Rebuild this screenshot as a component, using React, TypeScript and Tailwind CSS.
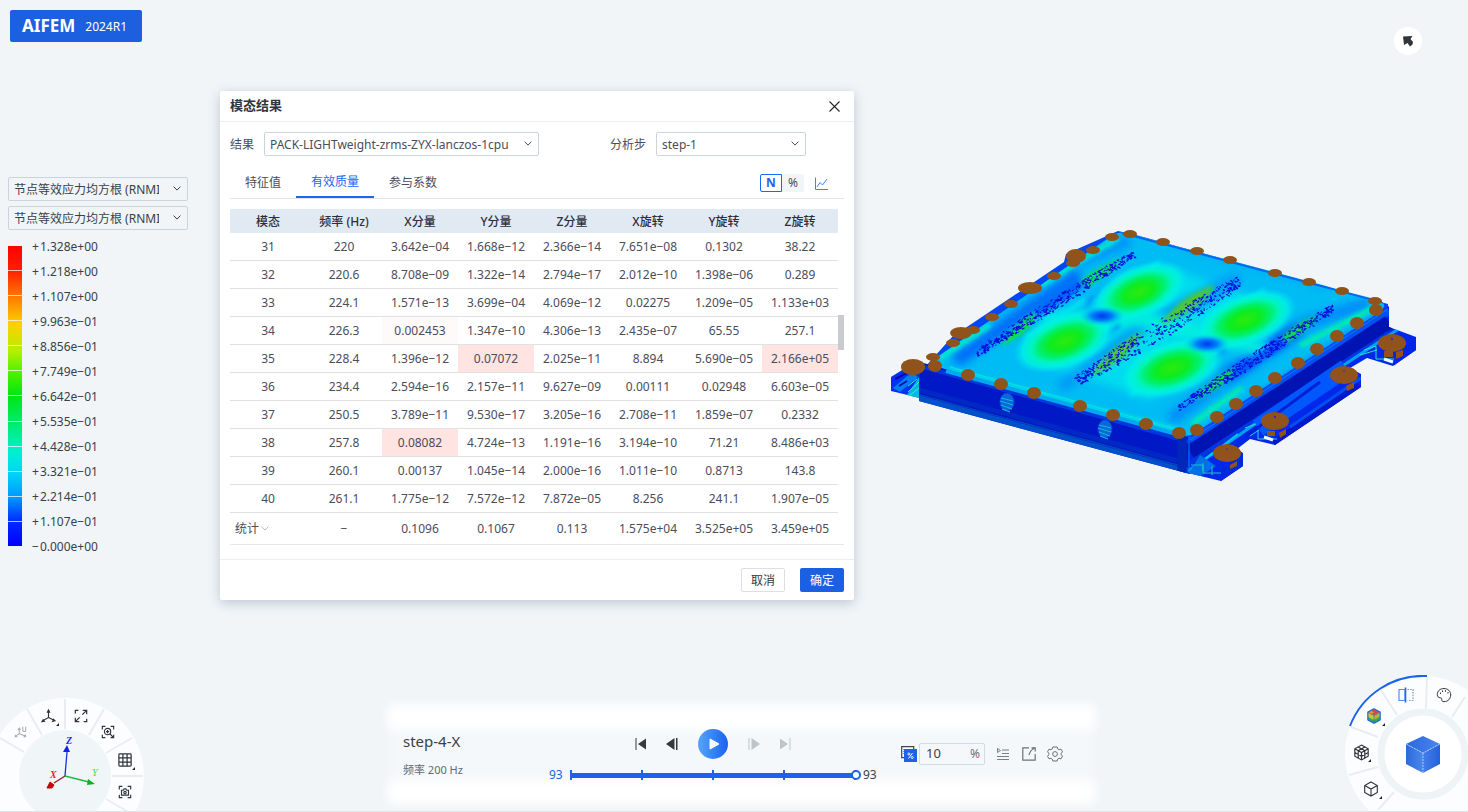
import { useState } from "react";
import type { ReactNode } from "react";

const headers = ["模态", "频率 (Hz)", "X分量", "Y分量", "Z分量", "X旋转", "Y旋转", "Z旋转"];

const rows: string[][] = [
  ["31", "220", "3.642e−04", "1.668e−12", "2.366e−14", "7.651e−08", "0.1302", "38.22"],
  ["32", "220.6", "8.708e−09", "1.322e−14", "2.794e−17", "2.012e−10", "1.398e−06", "0.289"],
  ["33", "224.1", "1.571e−13", "3.699e−04", "4.069e−12", "0.02275", "1.209e−05", "1.133e+03"],
  ["34", "226.3", "0.002453", "1.347e−10", "4.306e−13", "2.435e−07", "65.55", "257.1"],
  ["35", "228.4", "1.396e−12", "0.07072", "2.025e−11", "8.894", "5.690e−05", "2.166e+05"],
  ["36", "234.4", "2.594e−16", "2.157e−11", "9.627e−09", "0.00111", "0.02948", "6.603e−05"],
  ["37", "250.5", "3.789e−11", "9.530e−17", "3.205e−16", "2.708e−11", "1.859e−07", "0.2332"],
  ["38", "257.8", "0.08082", "4.724e−13", "1.191e−16", "3.194e−10", "71.21", "8.486e+03"],
  ["39", "260.1", "0.00137", "1.045e−14", "2.000e−16", "1.011e−10", "0.8713", "143.8"],
  ["40", "261.1", "1.775e−12", "7.572e−12", "7.872e−05", "8.256", "241.1", "1.907e−05"],
];

const summary = ["−", "0.1096", "0.1067", "0.113", "1.575e+04", "3.525e+05", "3.459e+05"];

const cellTint: Record<string, string> = {
  "34-2": "bg-[#fffafa]",
  "35-3": "bg-[#ffe4e2]",
  "35-7": "bg-[#ffe4e2]",
  "38-2": "bg-[#ffe4e2]",
};

const legend = [
  "+1.328e+00",
  "+1.218e+00",
  "+1.107e+00",
  "+9.963e−01",
  "+8.856e−01",
  "+7.749e−01",
  "+6.642e−01",
  "+5.535e−01",
  "+4.428e−01",
  "+3.321e−01",
  "+2.214e−01",
  "+1.107e−01",
  "−0.000e+00",
];

function Chevron({ className = "" }: { className?: string }) {
  return (
    <svg className={className} width="8" height="5" viewBox="0 0 8 5" fill="none" stroke="currentColor" strokeWidth="1" aria-hidden="true">
      <path d="M0.6 0.6 4 4.1 7.4 0.6" />
    </svg>
  );
}

function Dropdown({ label, value, width, id, padding = "pl-[5px] pr-7" }: { label: string; value: string; width: string; id: string; padding?: string }) {
  return (
    <div className={`relative h-6 ${width}`}>
      <select
        id={id}
        aria-label={label}
        className={`h-6 w-full appearance-none overflow-hidden rounded-[2px] border border-[#cbd3dd] bg-transparent pt-0.5 text-xs ${padding}`}
      >
        <option>{value}</option>
      </select>
      <Chevron className="pointer-events-none absolute right-[7px] top-[9px]" />
    </div>
  );
}

/* ---------- Result model ---------- */

const smallPins: [number, number][] = [
  [1112, 237], [1130, 234], [1093, 250], [1073, 263], [1054, 276], [1011, 304], [992, 317], [973, 330],
  [953, 343], [933, 357], [935, 366], [968, 375], [1001, 384], [1034, 393], [1080, 406], [1113, 415],
  [1146, 424], [1163, 242], [1197, 251], [1230, 260], [1275, 273], [1309, 282], [1342, 291], [1375, 301],
  [1376, 310], [1357, 323], [1337, 336], [1317, 349], [1298, 363], [1275, 378], [1256, 391], [1236, 404],
  [1217, 417], [1197, 430], [1179, 433],
];

const largePins: [number, number, number, number][] = [
  [1076, 256, 10, 7], [1030, 288, 12, 6], [961, 333, 11, 6], [913, 367, 12, 8],
  [1392, 343, 14, 9], [1344, 375, 14, 9], [1275, 421, 14, 9], [1227, 453, 14, 9],
];

const bands: [number, number, number, number][] = [
  [975, 353, 1133, 253],
  [1076, 380, 1238, 281],
  [1178, 407, 1332, 307],
];

function speckles(x1: number, y1: number, x2: number, y2: number, seed: number, spread: number) {
  let s = seed;
  const rnd = () => {
    s = (s * 1103515245 + 12345) % 2147483648;
    return s / 2147483648;
  };
  let d = "";
  for (let i = 0; i < 420; i++) {
    const t = rnd();
    const half = spread * (0.6 + 0.5 * Math.sin(t * Math.PI));
    const off = (rnd() - 0.5) * 2 * half;
    const x = x1 + (x2 - x1) * t + off * 0.5 + rnd();
    const y = y1 + (y2 - y1) * t + off * 0.9;
    const w = 0.6 + rnd() * 1.8;
    const slant = rnd() > 0.45 ? -1.4 : 1;
    d += `M${x.toFixed(1)} ${y.toFixed(1)}h${w.toFixed(1)}l${slant} 1.6h${(-w).toFixed(1)}Z`;
  }
  return d;
}

function Model() {
  return (
    <svg className="h-auto w-full max-w-[545px]" viewBox="880 220 545 270" role="img" aria-label="节点等效应力均方根">
      <defs>
        <clipPath id="topFace">
          <path d="M930 362 1110 237Q1120 230 1130 234L1380 300Q1388 305 1380 312L1195 433Q1187 438 1178 434L936 370Q928 367 930 362Z" />
        </clipPath>
        <clipPath id="frontFace">
          <path d="M920 362 1190 438V474L919 401Z" />
        </clipPath>
        <clipPath id="sideFace">
          <path d="M1188 438 1389 306V327L1416 337V350L1393 366 1367 358 1350 368 1361 374V387L1275 445 1250 439 1237 449 1243 453V466L1221 481 1188 473Z" />
        </clipPath>
        <filter id="b2" x="-50%" y="-50%" width="200%" height="200%"><feGaussianBlur stdDeviation="2" /></filter>
        <filter id="b5" x="-50%" y="-50%" width="200%" height="200%"><feGaussianBlur stdDeviation="5" /></filter>
        <radialGradient id="hot">
          <stop offset="0" stopColor="#2eea0e" />
          <stop offset="0.3" stopColor="#0cec20" />
          <stop offset="0.5" stopColor="#00f06c" />
          <stop offset="0.66" stopColor="#00f4c0" />
          <stop offset="0.82" stopColor="#00f2e6" stopOpacity="0.8" />
          <stop offset="1" stopColor="#00e0f0" stopOpacity="0" />
        </radialGradient>
        <radialGradient id="cold">
          <stop offset="0" stopColor="#0035f0" />
          <stop offset="0.45" stopColor="#0080fa" />
          <stop offset="1" stopColor="#00c8f4" stopOpacity="0" />
        </radialGradient>
      </defs>

      <path d="M891 377 915 362 924 364 920 398 891 391Z" fill="#0030f0" />
      <path d="M893 388 912 372 918 377 900 392Z" fill="#0080f0" />
      <path d="M907 395 919 377V398Z" fill="#00b8e0" />
      <path d="M908 392 919 382M909 396 919 388M908 386 917 379" stroke="#30f0c0" />
      <path d="M895 379 911 371M899 386 907 381" stroke="#0010b0" strokeWidth="2" />

      <path d="M926 366 952 337 1064 262 1066 254 1118 231 1136 235 1388 304 1388 315 1190 440Z" fill="#0048f4" />
      <path d="M940 359 1068 270 1120 236" stroke="#0022d4" strokeWidth="4" fill="none" />

      <g clipPath="url(#topFace)">
        <path d="M925 365 1120 228 1392 305 1188 442Z" fill="#00bcf4" />
        <g filter="url(#b5)" fill="none">
          <path d="M1040 362 1095 310 1170 268 1250 296 1215 350 1150 400Z" fill="#00dcee" />
          <path d="M955 361 1050 295 1080 275" stroke="#0068fa" strokeWidth="14" />
          <path d="M1060 268 1130 240" stroke="#0090fa" strokeWidth="12" />
          <path d="M1060 388 1140 327 1240 277" stroke="#0098f8" strokeWidth="12" />
          <path d="M1170 420 1230 375M1300 325 1370 303" stroke="#0088fa" strokeWidth="12" />
          <path d="M1225 378 1300 328" stroke="#0050fa" strokeWidth="14" />
          <path d="M1040 318 1150 320 1265 350" stroke="#00f0dc" strokeWidth="13" />
          <path d="M1180 245 1330 288" stroke="#00a8f8" strokeWidth="7" />
        </g>
        <g filter="url(#b2)" fill="none">
          <path d="M940 358 990 325M1040 285 1118 238" stroke="#00f0c8" strokeWidth="5" />
          <path d="M950 370 1060 400 1180 430" stroke="#00e8e8" strokeWidth="3" />
          <path d="M1192 424 1242 388M1300 346 1375 307" stroke="#00f4a8" strokeWidth="5" />
          <path d="M1205 429 1378 313" stroke="#0090f8" strokeWidth="4" />
          <path d="M1025 338 1085 300M1130 395 1190 355M1110 296 1160 262M1210 325 1265 290" stroke="#00e8f0" strokeWidth="5" />
          <path d="M1080 352 1120 325M1085 305 1115 280M1195 310 1230 288M1190 375 1225 350" stroke="#0094f8" strokeWidth="4" />
        </g>
        <ellipse cx="1139" cy="292" rx="52" ry="27" fill="url(#hot)" transform="rotate(-22 1139 292)" />
        <ellipse cx="1065" cy="341" rx="54" ry="28" fill="url(#hot)" transform="rotate(-20 1065 341)" />
        <ellipse cx="1245" cy="320" rx="54" ry="27" fill="url(#hot)" transform="rotate(-20 1245 320)" />
        <ellipse cx="1172" cy="368" rx="55" ry="28" fill="url(#hot)" transform="rotate(-18 1172 368)" />
        <ellipse cx="1102" cy="316" rx="23" ry="10" fill="url(#cold)" />
        <ellipse cx="1207" cy="344" rx="23" ry="10" fill="url(#cold)" />
        <g filter="url(#b2)">
          <path d="M1000 346Q1015 322 1040 310 1030 335 1000 346ZM1073 290Q1085 272 1122 258 1105 282 1073 290Z" fill="#0adc50" />
          <path d="M1090 376Q1110 346 1142 332 1132 358 1090 376ZM1160 325Q1180 295 1215 285 1205 308 1160 325Z" fill="#4cc838" />
          <path d="M1192 400Q1215 375 1240 366 1225 388 1192 400ZM1270 350Q1290 325 1318 315 1300 340 1270 350Z" fill="#0ae04c" />
          <path d="M1035 314 1082 283" stroke="#0060f4" strokeWidth="8" />
          <path d="M1235 373 1286 341" stroke="#0058f4" strokeWidth="7" />
        </g>
        {bands.map(([x1, y1, x2, y2], i) => (
          <path key={i} d={speckles(x1, y1, x2, y2, 17 + i * 31, i === 1 ? 8 : 5)} fill="#0010e0" />
        ))}
        <path d="M1122 233 1385 303" stroke="#0068f0" strokeWidth="2" />
      </g>

      <g clipPath="url(#frontFace)">
        <path d="M919 360 1190 436V476L917 402Z" fill="#0018c6" />
        <path d="M920 366 1190 442" stroke="#0038e0" strokeWidth="4" />
        <path d="M919 390 1190 464" stroke="#0028c4" strokeWidth="5" />
        <path d="M919 398 1190 472" stroke="#0050cc" strokeWidth="8" />
        <path d="M919 395 1190 469" stroke="#0038b8" strokeWidth="1" />
        <path d="M1182 437V476" stroke="#0028b8" strokeWidth="9" />
      </g>
      <path d="M946 371 1180 435" stroke="#00a8ec" strokeWidth="4" />
      <path d="M950 367 1176 429" stroke="#00e8d8" strokeWidth="1" />
      {[[1007, 402], [1105, 429]].map(([x, y]) => (
        <g key={x}>
          <ellipse cx={x} cy={y} rx="7" ry="9" fill="#0868d8" stroke="#0844e0" />
          <path d={`M${x - 6} ${y - 4}l12 3m-13 0 13 4m-12 0 11 4m-10 0 8 3`} stroke="#10b8dc" fill="none" />
        </g>
      ))}

      <g clipPath="url(#sideFace)">
        <path d="M1185 438 1420 280V500H1185Z" fill="#0028ea" />
        <path d="M1190 441 1389 311" stroke="#0050f4" strokeWidth="8" />
        <path d="M1190 452 1389 322" stroke="#0014b4" strokeWidth="14" />
        <path d="M1190 463 1389 333" stroke="#0038e0" strokeWidth="4" />
        <path d="M1188 471 1262 419 1400 328" stroke="#00a0f0" strokeWidth="3" fill="none" />
        <path d="M1258 428 1346 368" stroke="#0058fc" strokeWidth="18" />
        <path d="M1245 437 1320 382" stroke="#0020d4" strokeWidth="3" />
        <path d="M1276 447 1362 389" stroke="#0018cc" strokeWidth="16" />
        <path d="M1290 427 1361 378" stroke="#0050f0" strokeWidth="3" />
        <path d="M1192 469 1238 434" stroke="#00c8e8" strokeWidth="2" />
        <path d="M1189 473 1200 455 1216 466 1199 477Z" fill="#0070e8" />
        <path d="M1191 465h12v8h18M1203 463v8M1212 466v9" stroke="#20c0d0" fill="none" />
        <path d="M1221 469 1243 454V467L1221 482Z" fill="#0028e0" />
        <path d="M1245 428 1256 424M1258 430V439H1277M1250 436 1259 430" stroke="#20d8e0" fill="none" />
        <path d="M1364 350 1376 346V359H1395M1360 355 1377 350" stroke="#20e8c8" fill="none" />
        <path d="M1394 353 1416 339V353L1394 367Z" fill="#0024e8" />
      </g>
      <path d="M1189 437V473M1190 440 1388 309" stroke="#0080f0" strokeWidth="1" fill="none" />
      <path d="M1384 359 1393 362M1264 437 1273 440" stroke="#eafaff" strokeWidth="3" />

      <g fill="#91531c">
        <path d="M1384 351h9v6h-9ZM1396 352 1403 350V356L1396 359ZM1346 386 1354 382V388L1347 391ZM1267 431h8v5h-8ZM1279 433 1286 429V434L1280 438ZM1230 465 1237 461V466L1230 469Z" />
        {smallPins.map(([x, y], i) => (
          <ellipse key={i} cx={x} cy={y} rx="7" ry={(i > 9 && i < 17) || i > 23 ? 6 : 4} />
        ))}
        {largePins.map(([x, y, rx, ry], i) => (
          <ellipse key={i} cx={x} cy={y} rx={rx} ry={ry} />
        ))}
      </g>
      <path d="M1391 338l2 1-1 1ZM1343 371h2M1274 416l2 1-1 1ZM1226 449h2" stroke="#4020c0" fill="#4020c0" />
    </svg>
  );
}

/* ---------- Wheel icons ---------- */

function WheelButton({ label, place, children }: { label: string; place: string; children: ReactNode }) {
  return (
    <button type="button" aria-label={label} className={`absolute flex size-5 items-center justify-center text-[#30353c] ${place}`}>
      {children}
    </button>
  );
}

function Ico({ children, size = 14, sw = 1.2 }: { children: ReactNode; size?: number; sw?: number }) {
  return (
    <svg width={size} height={size} viewBox="0 0 16 16" fill="none" stroke="currentColor" strokeWidth={sw} aria-hidden="true">
      {children}
    </svg>
  );
}

const corners = "M1.5 5V1.5H5M11 1.5h3.5V5M14.5 11v3.5H11M5 14.5H1.5V11";

function ViewWheel() {
  return (
    <nav aria-label="视图" className="relative h-[115px] w-[145px] shrink-0">
      <svg className="block" width="145" height="115" viewBox="0 697 145 115" aria-hidden="true">
        <circle cx="66" cy="776" r="78" fill="#fcfdfe" />
        <path d="M0 744H24V812H0Z" fill="#fcfdfe" />
        <circle cx="65" cy="776" r="46" fill="#f0f5f7" />
        <path d="M0 738 24 752M27 709 42 735M65 699V729M104 709 89 735M132 738 106 753M143 776H112M106 799 132 814" stroke="#e9edf1" strokeWidth="2" />
        <path d="M65 776 67 752" stroke="#1432e0" strokeWidth="1.3" />
        <path d="M67 745 70 752H63Z" fill="#1020f0" />
        <path d="M65 776 54 783" stroke="#8a2030" strokeWidth="1.3" />
        <path d="M47 788 50 782 54 785 52 788Z" fill="#c00808" stroke="#c00808" />
        <path d="M65 776 89 782" stroke="#20b840" strokeWidth="1.3" />
        <path d="M95 784 88 779 87 785Z" fill="#10b020" />
        <g fontFamily="Liberation Serif, serif" fontStyle="italic" fontWeight="700" fontSize="10">
          <text x="66" y="744" fill="#1824f0">Z</text>
          <text x="50" y="778" fill="#f02020">X</text>
          <text x="92" y="776" fill="#40dc50" fontWeight="400">Y</text>
        </g>
        <path d="M59 726V723L56 726ZM135 770V767L132 770Z" fill="#202428" />
      </svg>
      <WheelButton label="局部坐标系" place="left-[11px] top-[25px] opacity-40">
        <Ico>
          <path d="M6 4v6l-4.500 3M6 10l7 2.500M4.500 5.500 6 3.500l1.500 2M1.500 11v2.500H4M11 14l2.500-1.200-1-2" />
          <path d="M10 2v4q0 1.500 1.700 1.500T13.400 6V2" />
        </Ico>
      </WheelButton>
      <WheelButton label="坐标系" place="left-[38px] top-[9px]">
        <Ico size={15}>
          <path d="M8 2v7L2 12.500M8 9l6 3M6.800 3.500 8 1l1.200 2.500ZM1 13.500l2.600-.3-1.300-1.800ZM15 12.600l-2.600.6.9-2.200Z" />
        </Ico>
      </WheelButton>
      <WheelButton label="全屏" place="left-[71px] top-[9px]">
        <Ico sw={1.4}>
          <path d="M1.5 5V1.5H5M10 1.5h4.5V6M14.5 1.5 9.5 6.5M14.5 11v3.5H11M6 14.5H1.5V10M1.5 14.5l5-5" />
        </Ico>
      </WheelButton>
      <WheelButton label="缩放" place="left-[98px] top-[25px]">
        <Ico sw={1.3}>
          <path d={corners} />
          <circle cx="7.5" cy="7.5" r="3.6" />
          <path d="M10.2 10.2 14 14M7.5 5.7v3.6M5.7 7.5h3.6" />
        </Ico>
      </WheelButton>
      <WheelButton label="网格" place="left-[115px] top-[53px]">
        <Ico sw={1.4}>
          <rect x="1" y="1" width="14" height="14" rx="1" />
          <path d="M5.6 1v14M10.4 1v14M1 5.6h14M1 10.4h14" />
        </Ico>
      </WheelButton>
      <WheelButton label="截图" place="left-[115px] top-[85px]">
        <Ico sw={1.3}>
          <path d={corners} />
          <path d="M4 6h2l1-1.5h2L10 6h2v5.5H4Z" />
          <circle cx="8" cy="8.7" r="1.4" />
        </Ico>
      </WheelButton>
    </nav>
  );
}

function RenderWheel() {
  return (
    <nav aria-label="显示" className="relative h-[137px] w-[124px] shrink-0">
      <svg className="block" width="124" height="137" viewBox="1344 675 124 137" aria-hidden="true">
        <defs>
          <linearGradient id="cubeTop" x1="0" x2="1"><stop stopColor="#2a68e0" /><stop offset="1" stopColor="#4a84ec" /></linearGradient>
          <linearGradient id="cubeL" x1="0" x2="1"><stop stopColor="#2a6adc" /><stop offset="1" stopColor="#4c88ea" /></linearGradient>
          <linearGradient id="cubeR" x1="0" x2="1"><stop stopColor="#4480ea" /><stop offset="1" stopColor="#2460dc" /></linearGradient>
        </defs>
        <circle cx="1423" cy="754" r="78" fill="#fcfdfe" />
        <circle cx="1423" cy="754" r="42" fill="#fff" stroke="#eef3f6" strokeWidth="7" />
        <path d="M1427 677 1426 708M1381 690 1397 715M1351 727 1378 737M1349 775 1378 767M1378 810 1394 792M1465 697 1452 717" stroke="#e9edf1" strokeWidth="2" />
        <path d="M1350 726A78 78 0 0 1 1427 676" stroke="#1b63ea" strokeWidth="2" fill="none" />
        <path d="M1423 736 1440 744 1423 753 1406 744Z" fill="url(#cubeTop)" />
        <path d="M1406 744 1423 753V773L1406 764Z" fill="url(#cubeL)" />
        <path d="M1440 744 1423 753V773L1440 764Z" fill="url(#cubeR)" />
        <path d="M1406 744 1423 753 1440 744M1423 753V773" stroke="#a8c8fa" strokeDasharray="2 1" fill="none" />
        <path d="M1385 726V723L1382 726ZM1371 762V759L1368 762ZM1382 799V796L1379 799Z" fill="#202428" />
      </svg>
      <WheelButton label="剖切" place="left-[52px] top-[10px]">
        <Ico size={16}>
          <path d="M1 2.500h6v11H1Z" stroke="#5a90f4" strokeWidth="1.200" />
          <path d="M7.500.5v15" stroke="#2468f0" strokeWidth="1.600" />
          <path d="M9.500 2.500H15v11H9.500" stroke="#8098c0" strokeDasharray="1.500 1.200" />
        </Ico>
      </WheelButton>
      <WheelButton label="配色" place="left-[90px] top-[10px]">
        <Ico size={16} sw={1}>
          <path d="M8 1.500c-4 0-6.700 2.700-6.700 6 0 2 1.200 3.300 3 3.300 1.300 0 1.500.6 1.400 1.700-.1 1.300.8 2.200 2.300 2.200 4 0 6.700-3 6.700-6.700S12 1.500 8 1.500Z" />
          <path d="M4 6.300h1M6 4.200h1M9 4h1M11.500 5.800h1" strokeWidth="1.400" />
        </Ico>
      </WheelButton>
      <WheelButton label="云图" place="left-[20px] top-[31px]">
        <Ico size={16} sw={0.8}>
          <path d="M8 1 14 4.300 8 7.600 2 4.300Z" fill="#d84838" stroke="none" />
          <path d="M2 4.300 8 7.600V15L2 11.700Z" fill="#c8c830" stroke="none" />
          <path d="M2 9 8 12V15L2 11.700Z" fill="#38a850" stroke="none" />
          <path d="M14 4.300 8 7.600V15L14 11.700Z" fill="#b0b838" stroke="none" />
          <path d="M14 8.500 8 12V15L14 11.700Z" fill="#38a850" stroke="none" />
          <path d="M2 4.300 5 2.600 8 4.500 5 6Z" fill="#e0a030" stroke="none" />
          <path d="M8 .8 14.200 4.200V11.800L8 15.200 1.800 11.800V4.200Z" stroke="#2068d8" strokeWidth="1.200" />
          <path d="M2 4.300l6 3.300 6-3.300M8 7.600V15" stroke="#3070c0" strokeWidth=".7" />
        </Ico>
      </WheelButton>
      <WheelButton label="网格显示" place="left-[7px] top-[67px]">
        <Ico size={17} sw={1.1}>
          <path d="M8 1 14.300 4.500V11.500L8 15 1.700 11.500V4.500ZM1.700 4.500 8 8l6.300-3.500M8 8v7M4.800 2.800l6.300 3.500v7M11.200 2.800 4.900 6.300v7M1.700 8 8 11.500 14.300 8" />
        </Ico>
      </WheelButton>
      <WheelButton label="实体显示" place="left-[17px] top-[104px]">
        <Ico size={16} sw={1.1}>
          <path d="M8 1 14.300 4.500V11.500L8 15 1.700 11.500V4.500ZM1.700 4.500 8 8l6.300-3.500M8 8v7" />
        </Ico>
      </WheelButton>
    </nav>
  );
}

/* ---------- Playback ---------- */

function Playback() {
  const [frame, setFrame] = useState(93);
  return (
    <section aria-label="动画播放" className="relative flex h-[112px] w-[707px] pl-[15px]">
      <div className="absolute inset-x-0 bottom-[7px] top-1 bg-white/30 blur-[5px]" />
      <div className="absolute inset-x-0 top-[5px] h-[24px] bg-white blur-[6px]" />
      <div className="absolute inset-x-0 bottom-[9px] h-[22px] bg-white blur-[6px]" />
      <div className="relative w-[146px] pt-[31px] text-[#3c4148]">
        <h2 className="text-[15px] leading-5">step-4-X</h2>
        <p className="mt-[10px] text-[11px] leading-[18px] text-[#636b75]">频率 200 Hz</p>
      </div>

      <div className="relative w-[330px] pt-[29px]">
        <div className="flex h-[30px] items-center justify-center pr-0.5 text-[#353a40]">
          <button type="button" aria-label="第一帧" className="mr-5 block">
            <svg width="11" height="12" viewBox="0 0 11 12"><path d="M.5 0h1v12h-1ZM11 .5v11L3 6Z" fill="currentColor" /></svg>
          </button>
          <button type="button" aria-label="上一帧" className="mr-5 block">
            <svg width="12" height="12" viewBox="0 0 12 12"><path d="M8.500 0v12L0 6ZM10 0h1.500v12H10Z" fill="currentColor" /></svg>
          </button>
          <button type="button" aria-label="播放" className="flex size-[30px] items-center justify-center rounded-full bg-linear-to-r from-[#55a5fb] to-[#1d5ff0] text-white">
            <svg className="ml-0.5" width="11" height="12" viewBox="0 0 11 12"><path d="M1 1 10 6 1 11Z" fill="currentColor" stroke="currentColor" strokeLinejoin="round" /></svg>
          </button>
          <button type="button" aria-label="下一帧" className="ml-5 block text-[#bcc4cc]">
            <svg width="12" height="12" viewBox="0 0 12 12"><path d="M3.500 0v12L12 6ZM.5 0H1.500v12H.5Z" fill="currentColor" /></svg>
          </button>
          <button type="button" aria-label="最后一帧" className="ml-5 block text-[#bcc4cc]">
            <svg width="11" height="12" viewBox="0 0 11 12"><path d="M9.500 0h1v12h-1ZM0 .5v11L8 6Z" fill="currentColor" /></svg>
          </button>
        </div>
        <div className="mt-2 flex h-4 items-center text-xs">
          <output className="w-[21px] text-[#1b63ea]">{frame}</output>
          <div className="relative flex h-4 w-[291px] items-center">
            <div className="absolute left-0 h-[5px] w-[286px] bg-[#1b63ea]" />
            <div className="absolute left-0 flex h-[10px] w-[286px] justify-between">
              <span className="w-0.5 bg-[#1b63ea]" />
              <span className="w-0.5 bg-[#1b63ea]" />
              <span className="w-0.5 bg-[#1b63ea]" />
              <span className="w-0.5 bg-[#1b63ea]" />
              <span className="w-0.5 bg-[#1b63ea]" />
            </div>
            <input
              type="range"
              aria-label="帧"
              min={0}
              max={93}
              value={frame}
              onChange={(e) => setFrame(Number(e.target.value))}
              className="relative h-4 w-full appearance-none bg-transparent [&::-webkit-slider-thumb]:size-[10px] [&::-webkit-slider-thumb]:appearance-none [&::-webkit-slider-thumb]:rounded-full [&::-webkit-slider-thumb]:border-2 [&::-webkit-slider-thumb]:border-solid [&::-webkit-slider-thumb]:border-[#1b63ea] [&::-webkit-slider-thumb]:bg-white"
            />
          </div>
          <span className="pl-0.5 text-[#3c4148]">93</span>
        </div>
      </div>

      <div className="relative ml-[22px] mt-[43px] flex h-[22px] items-center text-[#6a717a]">
        <button type="button" aria-label="比例" className="block">
          <svg width="16" height="18" viewBox="0 0 16 18">
            <path d="M.7 1.700h12v11H.7Z" fill="#fff" stroke="#40454c" strokeWidth="1.200" />
            <path d="M2.500 4v6" stroke="#8a9098" strokeDasharray="1 1" />
            <rect x="3" y="4" width="13" height="13" fill="#1b63ea" />
            <path d="M7.500 13.500 11.500 8" stroke="#fff" />
            <circle cx="7.800" cy="9" r="1" fill="none" stroke="#fff" strokeWidth=".9" />
            <circle cx="11.300" cy="12.500" r="1" fill="none" stroke="#fff" strokeWidth=".9" />
          </svg>
        </button>
        <label className="ml-0.5 flex h-[22px] w-[66px] items-center rounded-[2px] border border-[#d4dae3] px-1">
          <input aria-label="变形比例" defaultValue="10" className="w-10 bg-transparent pl-0.5 text-[13px] text-[#3c4148] outline-none" />
          <span className="ml-auto text-xs">%</span>
        </label>
        <button type="button" aria-label="播放列表" className="ml-[11px] block">
          <svg width="14" height="14" viewBox="0 0 14 14" fill="none" stroke="currentColor" strokeWidth=".9"><path d="M6 3h7M6 6.500h7M1 9.500h12M1 12.500h12M1.500 1.500v4L4.500 3.500Z" /></svg>
        </button>
        <button type="button" aria-label="导出" className="ml-3 block">
          <svg width="14" height="14" viewBox="0 0 14 14" fill="none" stroke="currentColor" strokeWidth="1.200"><path d="M7 .8H.8v12.400h12.400V7M9.500.8h3.700V4.500M13 1Q8 3 7 8" /></svg>
        </button>
        <button type="button" aria-label="设置" className="ml-[11px] block">
          <svg width="16" height="16" viewBox="0 0 16 16" fill="none" stroke="currentColor" strokeWidth="1" strokeLinejoin="round">
            <path d="M5.800 1h4.400l.5 1.900 1.400.8 1.900-.5 1.500 2.600-1.300 1.400v1.600l1.300 1.400-1.500 2.600-1.900-.5-1.400.8-.5 1.900H5.800l-.5-1.900-1.400-.8-1.900.5L.5 10.200l1.300-1.400V7.200L.5 5.800 2 3.200l1.900.5 1.400-.8Z" />
            <circle cx="8" cy="8" r="2.400" />
          </svg>
        </button>
      </div>
    </section>
  );
}

/* ---------- Dialog ---------- */

function ResultDialog() {
  return (
    <section
      role="dialog"
      aria-labelledby="dialog-title"
      className="mt-9 w-[634px] shrink-0 self-start rounded-[2px] bg-white text-xs text-[#4a4d5c] shadow-[0_3px_12px_rgba(60,80,110,0.28)]"
    >
      <header className="flex h-[31px] items-center justify-between border-b border-[#eceff2] px-[10px]">
        <h1 id="dialog-title" className="text-[13px] font-bold text-[#2e3440]">模态结果</h1>
        <button type="button" aria-label="关闭" className="mr-1 block text-[#22262c]">
          <svg width="11" height="11" viewBox="0 0 11 11" stroke="currentColor" strokeWidth="1.100"><path d="M.5.5l10 10M10.500.5l-10 10" /></svg>
        </button>
      </header>

      <div className="px-[10px] pb-[14px] pt-[10px]">
        <div className="flex items-center gap-[10px]">
          <label htmlFor="result" className="pt-0.5">结果</label>
          <Dropdown id="result" label="结果" value="PACK-LIGHTweight-zrms-ZYX-lanczos-1cpu" width="w-[275px]" padding="pl-[5px] pr-5" />
          <label htmlFor="step" className="ml-[61px] pt-0.5">分析步</label>
          <Dropdown id="step" label="分析步" value="step-1" width="w-[150px]" />
        </div>

        <div className="mt-[10px] flex h-[33px] items-end justify-between border-b border-[#e4e7ea]">
          <div role="tablist" className="flex">
            <button type="button" role="tab" aria-selected="false" className="h-8 border-b-2 border-transparent px-[15px] pt-1">特征值</button>
            <button type="button" role="tab" aria-selected="true" className="h-8 border-b-2 border-[#1b66f2] px-[15px] pt-0.5 text-[#1b66f2]">有效质量</button>
            <button type="button" role="tab" aria-selected="false" className="h-8 border-b-2 border-transparent px-[15px] pt-1">参与系数</button>
          </div>
          <div className="mb-[6px] mr-4 flex items-center">
            <button type="button" aria-pressed="true" className="h-[18px] w-[22px] rounded-l-[2px] border border-[#1b66f2] font-bold leading-4 text-[#1b66f2]">N</button>
            <button type="button" aria-pressed="false" className="h-[18px] w-[22px] rounded-r-[2px] bg-[#f2f5f8] leading-[18px]">%</button>
            <button type="button" aria-label="图表" className="ml-[11px] block text-[#3d84f5]">
              <svg width="13" height="13" viewBox="0 0 13 13" fill="none" stroke="currentColor"><path d="M.5.500V12.500H13M2 10l3-4.500 2.500 2.500L12 2" /></svg>
            </button>
          </div>
        </div>

        <div className="relative mt-[10px] border-b border-[#e4e7ea]">
          <table className="w-[608px] table-fixed border-separate border-spacing-0 text-center">
            <thead>
              <tr className="h-6 bg-[#e1e9f2] text-[#2b2f3c]">
                {headers.map((h) => (
                  <th key={h} scope="col" className="p-0 pt-0.5 font-medium">{h}</th>
                ))}
              </tr>
            </thead>
            <tbody>
              {rows.map((row) => (
                <tr key={row[0]}>
                  {row.map((cell, c) => (
                    <td key={c} className={`h-7 border-b border-[#dfe2e5] p-0 ${cellTint[`${row[0]}-${c}`] ?? ""}`}>{cell}</td>
                  ))}
                </tr>
              ))}
            </tbody>
            <tfoot>
              <tr className="h-[31px]">
                <th scope="row" className="p-0 pl-[5px] text-left font-normal">
                  <span className="flex items-center gap-0.5">统计<Chevron className="text-[#b4b9c0]" /></span>
                </th>
                {summary.map((cell, c) => (
                  <td key={c} className="p-0">{cell}</td>
                ))}
              </tr>
            </tfoot>
          </table>
          <div className="absolute right-0 top-[106px] h-[35px] w-[6px] bg-[#c9cbce]" />
        </div>
      </div>

      <footer className="flex h-[41px] items-center justify-end gap-[15px] border-t border-[#eceff2] px-[10px]">
        <button type="button" className="h-6 w-11 rounded-[2px] border border-[#dcdfe4] bg-white pt-0.5 text-[#33373f]">取消</button>
        <button type="button" className="h-6 w-11 rounded-[2px] bg-[#1b5fe2] pt-0.5 text-white">确定</button>
      </footer>
    </section>
  );
}

export default function App() {
  return (
    <div className="relative flex min-h-screen flex-col overflow-x-hidden bg-[#f1f5f8] [font-family:'Noto_Sans','Noto_Sans_CJK_SC',sans-serif]">
      <header className="flex h-[55px] items-start justify-between pl-[10px] pr-[46px] pt-[10px]">
        <div className="flex h-8 w-[132px] items-center gap-[10px] rounded-[2px] bg-[#1c60e0] pl-3 text-white">
          <span className="text-[17px] font-bold">AIFEM</span>
          <span className="pt-0.5 text-xs">2024R1</span>
        </div>
        <button type="button" aria-label="选择" className="mt-[17px] flex size-7 items-center justify-center rounded-full bg-white text-[#30353c]">
          <svg width="12" height="12" viewBox="0 0 12 12"><path d="M1 1.500 10.500 1 8.500 4 11 7 10.500 9.500 8 11.500 5.500 8 2 10Z" fill="currentColor" /></svg>
        </button>
      </header>

      <main className="flex">
        <aside className="w-[220px] shrink-0 pl-2 pt-[122px] text-xs text-[#3a3f48]">
          <div className="flex flex-col gap-[5px]">
            <Dropdown id="field-a" label="云图变量" value="节点等效应力均方根 (RNMISES)" width="w-[180px]" />
            <Dropdown id="field-b" label="变形变量" value="节点等效应力均方根 (RNMISES)" width="w-[180px]" />
          </div>
          <div className="mt-1 flex">
            <div className="mt-3 flex h-[300px] w-[14px] flex-col divide-y divide-white/70 [background-image:linear-gradient(to_bottom,#ff0000_0%,#ff1e00_8%,#ff7a00_17%,#ffd000_26%,#b4f000_35%,#46f000_43%,#00e614_50%,#00ec78_60%,#00f0d2_69%,#00d2fa_76%,#0096ff_84%,#0028ff_92%,#0000ff_100%)]">
              {legend.slice(1).map((l) => (
                <span key={l} className="flex-1" />
              ))}
            </div>
            <ul className="ml-[10px] text-xs leading-[25px]">
              {legend.map((l) => (
                <li key={l} className="flex gap-px leading-[25px]">
                  <span>{l[0]}</span>
                  <span>{l.slice(1)}</span>
                </li>
              ))}
            </ul>
          </div>
        </aside>
        <ResultDialog />
        <div className="min-w-0 flex-1 pl-[26px] pt-[165px]">
          <Model />
        </div>
      </main>

      <div className="mt-auto flex items-end">
        <ViewWheel />
        <div className="flex flex-1 justify-center pr-[6px]">
          <Playback />
        </div>
        <RenderWheel />
      </div>
      <div className="absolute inset-x-0 bottom-0 h-px bg-[#e2e5e7]" />
    </div>
  );
}
